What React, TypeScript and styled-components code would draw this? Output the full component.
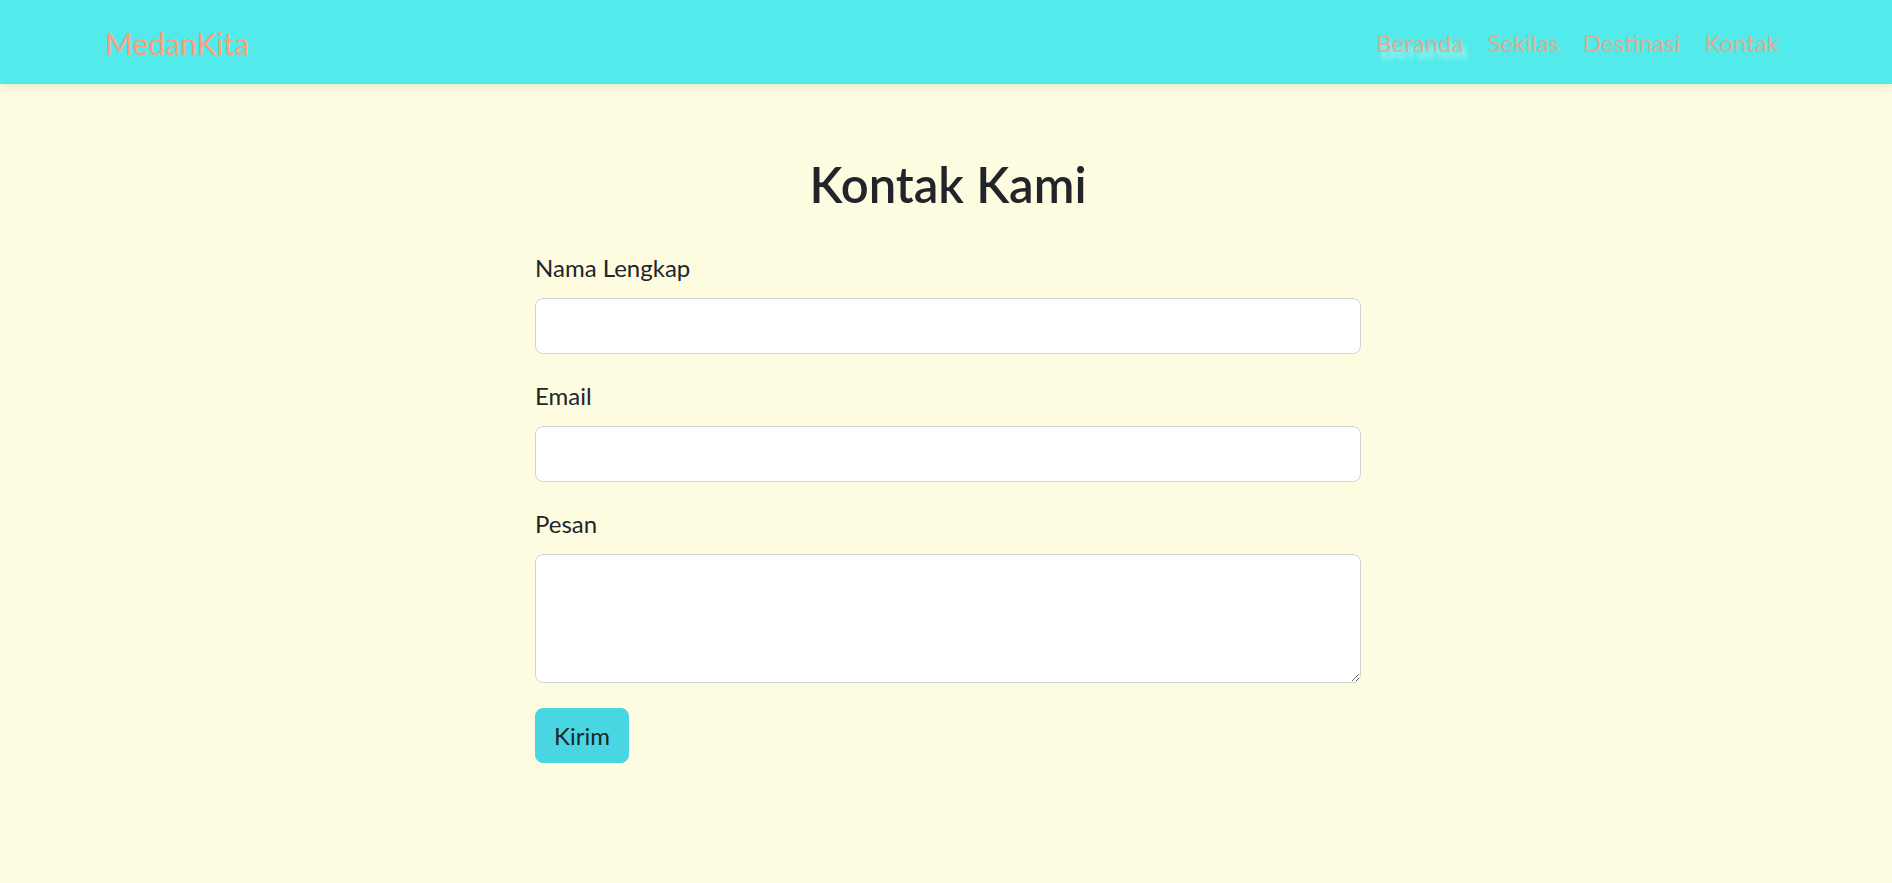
import styled, { createGlobalStyle } from 'styled-components';

const GlobalStyle = createGlobalStyle`
	* {
		box-sizing: border-box;
	}
	body {
		margin: 0;
		background: #fefce0;
		font-family: Lato, 'Open Sans', sans-serif;
		color: #212529;
	}
`;

const Navbar = styled.nav`
	height: 84px;
	background: #52eaea;
	box-shadow: 0 3px 6px rgba(0, 0, 0, 0.075);
	display: flex;
	align-items: center;
	justify-content: space-between;
	padding: 0 101px 0 105px;
`;

const Brand = styled.a`
	font-size: 30px;
	color: #fca07a;
	text-decoration: none;
	padding-top: 2px;
`;

const NavList = styled.ul`
	display: flex;
	list-style: none;
	margin: 0;
	padding: 0;
`;

const NavLink = styled.a<{ $active?: boolean }>`
	display: block;
	padding: 0 12px;
	font-size: 24px;
	color: #d9ae93;
	text-decoration: none;
	text-shadow: ${(p) =>
		p.$active ? '4px 7px 4px rgba(255, 255, 255, 0.55)' : 'none'};
`;

const Main = styled.main`
	padding: 72px 0 72px 4px;
`;

const FormBox = styled.form`
	width: 826px;
	margin: 0 auto;
`;

const Title = styled.h2`
	margin: 0 0 36px;
	text-align: center;
	font-size: 49px;
	font-weight: 600;
	line-height: 1.18;
	color: #212529;
`;

const Field = styled.div`
	margin-bottom: 24px;
`;

const Label = styled.label`
	display: block;
	margin-bottom: 12px;
	font-size: 24px;
	line-height: 36px;
`;

const Input = styled.input`
	display: block;
	width: 100%;
	height: 56px;
	padding: 9px 18px;
	font: inherit;
	font-size: 24px;
	background: #fff;
	border: 1px solid #d0d4d9;
	border-radius: 8px;
	outline: none;
`;

const TextArea = styled.textarea`
	display: block;
	width: 100%;
	height: 129px;
	padding: 9px 18px;
	font: inherit;
	font-size: 24px;
	background: #fff;
	border: 1px solid #d0d4d9;
	border-radius: 8px;
	outline: none;
	resize: vertical;
`;

const SubmitButton = styled.button`
	height: 55px;
	margin-top: 1px;
	padding: 0 18px;
	font: inherit;
	font-size: 24px;
	color: #212529;
	background: #48d6e2;
	border: 1px solid #48d6e2;
	border-radius: 8px;
	cursor: pointer;
`;

const links = ['Beranda', 'Sekilas', 'Destinasi', 'Kontak'];

export default function App() {
	return (
		<>
			<GlobalStyle />
			<Navbar>
				<Brand href="#">MedanKita</Brand>
				<NavList>
					{links.map((l, i) => (
						<li key={l}>
							<NavLink href="#" $active={i === 0}>
								{l}
							</NavLink>
						</li>
					))}
				</NavList>
			</Navbar>
			<Main>
				<FormBox onSubmit={(e) => e.preventDefault()}>
					<Title>Kontak Kami</Title>
					<Field>
						<Label htmlFor="nama">Nama Lengkap</Label>
						<Input id="nama" type="text" />
					</Field>
					<Field>
						<Label htmlFor="email">Email</Label>
						<Input id="email" type="email" />
					</Field>
					<Field>
						<Label htmlFor="pesan">Pesan</Label>
						<TextArea id="pesan" />
					</Field>
					<SubmitButton type="submit">Kirim</SubmitButton>
				</FormBox>
			</Main>
		</>
	);
}
